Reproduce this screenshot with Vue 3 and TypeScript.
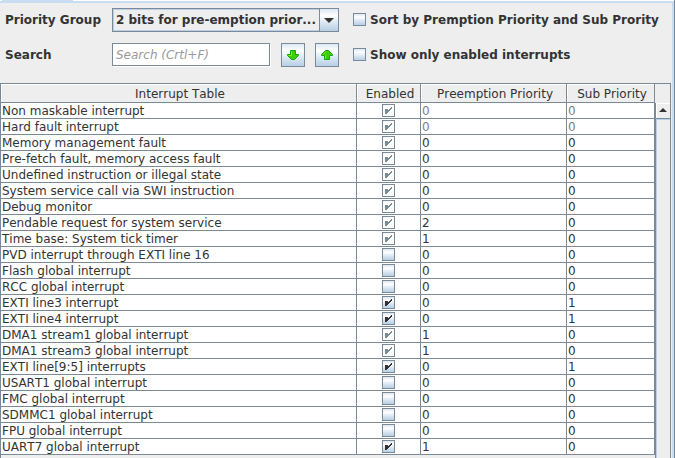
<script setup lang="ts">
import { computed, ref } from 'vue'

interface Interrupt {
  name: string
  enabled: boolean
  locked: boolean
  preemption: number
  sub: number
  fixed?: boolean
}

const make = (
  name: string,
  enabled: boolean,
  locked: boolean,
  preemption = 0,
  sub = 0,
  fixed = false,
): Interrupt => ({ name, enabled, locked, preemption, sub, fixed })

const interrupts = ref<Interrupt[]>([
  make('Non maskable interrupt', true, true, 0, 0, true),
  make('Hard fault interrupt', true, true, 0, 0, true),
  make('Memory management fault', true, true),
  make('Pre-fetch fault, memory access fault', true, true),
  make('Undefined instruction or illegal state', true, true),
  make('System service call via SWI instruction', true, true),
  make('Debug monitor', true, true),
  make('Pendable request for system service', true, true, 2),
  make('Time base: System tick timer', true, true, 1),
  make('PVD interrupt through EXTI line 16', false, false),
  make('Flash global interrupt', false, false),
  make('RCC global interrupt', false, false),
  make('EXTI line3 interrupt', true, false, 0, 1),
  make('EXTI line4 interrupt', true, false, 0, 1),
  make('DMA1 stream1 global interrupt', true, true, 1),
  make('DMA1 stream3 global interrupt', true, true, 1),
  make('EXTI line[9:5] interrupts', true, false, 0, 1),
  make('USART1 global interrupt', false, false),
  make('FMC global interrupt', false, false),
  make('SDMMC1 global interrupt', false, false),
  make('FPU global interrupt', false, false),
  make('UART7 global interrupt', true, false, 1),
])

const checkPath =
  'M3 5h3v1h1v-1h1v-1h1v-1h1v2h-1v1h-1v1h-1v1h-1v1h-1v1h-2z'

const group = ref('2')
const query = ref('')
const sorted = ref(false)
const onlyEnabled = ref(false)

const rows = computed(() => {
  const list = interrupts.value.filter((i) => !onlyEnabled.value || i.enabled)
  return sorted.value
    ? [...list].sort((a, b) => a.preemption - b.preemption || a.sub - b.sub)
    : list
})

const isMatch = (name: string) =>
  query.value !== '' && name.toLowerCase().includes(query.value.toLowerCase())
</script>

<template>
  <main class="panel">
    <div class="tab-edge"><span class="tab-selected"></span></div>

    <form class="controls" @submit.prevent>
      <label for="group">Priority Group</label>
      <div class="combo">
        <select id="group" v-model="group">
          <option value="2">2 bits for pre-emption prior...</option>
        </select>
        <span class="combo-arrow">
          <svg width="10" height="5" viewBox="0 0 10 5"><path d="M0 0H10L5 5Z" /></svg>
        </span>
      </div>
      <label class="option">
        <span class="tick">
          <input v-model="sorted" type="checkbox" />
          <svg width="13" height="13" viewBox="0 0 13 13"><path :d="checkPath" /></svg>
        </span>
        Sort by Premption Priority and Sub Prority
      </label>

      <label for="search">Search</label>
      <div class="search">
        <input id="search" v-model="query" type="text" placeholder="Search (Crtl+F)" />
        <button type="button" aria-label="Next match">
          <svg width="12" height="10" viewBox="0 0 12 10">
            <path class="leaf" d="M3.5 .5h5v4h3v1l-4 4h-3l-4 -4v-1h3z" />
            <path class="shine" d="M4.500 1v4.500h-3" />
          </svg>
        </button>
        <button type="button" aria-label="Previous match">
          <svg width="12" height="10" viewBox="0 0 12 10">
            <path class="leaf" d="M3.5 9.500h5v-4h3v-1l-4 -4h-3l-4 4v1h3z" />
            <path class="shine" d="M2 4.500L5.500 1.500M4.500 5v4" />
          </svg>
        </button>
      </div>
      <label class="option">
        <span class="tick">
          <input v-model="onlyEnabled" type="checkbox" />
          <svg width="13" height="13" viewBox="0 0 13 13"><path :d="checkPath" /></svg>
        </span>
        Show only enabled interrupts
      </label>
    </form>

    <section class="grid-area">
      <table>
        <colgroup>
          <col />
          <col class="col-enabled" />
          <col class="col-preemption" />
          <col class="col-sub" />
        </colgroup>
        <thead>
          <tr>
            <th>Interrupt Table</th>
            <th>Enabled</th>
            <th>Preemption Priority</th>
            <th>Sub Priority</th>
          </tr>
        </thead>
        <tbody>
          <tr v-for="row in rows" :key="row.name" :class="{ match: isMatch(row.name) }">
            <td>{{ row.name }}</td>
            <td class="state">
              <span class="tick">
                <input
                  v-model="row.enabled"
                  type="checkbox"
                  :disabled="row.locked"
                  :aria-label="row.name"
                />
                <svg width="13" height="13" viewBox="0 0 13 13"><path :d="checkPath" /></svg>
              </span>
            </td>
            <td :class="{ fixed: row.fixed }">{{ row.preemption }}</td>
            <td :class="{ fixed: row.fixed }">{{ row.sub }}</td>
          </tr>
        </tbody>
      </table>
      <div class="scrollbar">
        <div class="corner"></div>
        <button type="button" class="scroll-up" aria-label="Scroll up">
          <svg width="8" height="4" viewBox="0 0 8 4"><path d="M0 4H8L4 0Z" /></svg>
        </button>
        <div class="thumb"></div>
      </div>
    </section>
  </main>
</template>

<style>
body {
  margin: 0;
  background: #eeeeee;
}
</style>

<style scoped>
.panel {
  --line: #7a8a99;
  --ocean: linear-gradient(#dde8f3, #ffffff 30%, #dde8f3 60%, #b8cfe5);
  display: flex;
  flex-direction: column;
  box-sizing: border-box;
  min-height: 100vh;
  border-right: 1px solid var(--line);
  box-shadow: inset -2px 0 #c8ddf2;
  padding-right: 3px;
  background: #eeeeee;
  color: #333333;
  font: 12px/14px "DejaVu Sans", sans-serif;
  font-kerning: none;
}

.tab-edge {
  height: 1px;
  margin-right: -3px;
  border-bottom: 2px solid #c8ddf2;
  background: #ffffff;
}

.tab-selected {
  display: block;
  width: 71px;
  height: 1px;
  margin-left: 2px;
  background: #c8ddf2;
}

.controls {
  display: grid;
  grid-template-columns: 107px 227px 1fr;
  row-gap: 11px;
  align-items: center;
  padding: 5px 0 16px 5px;
  font-weight: bold;
  white-space: nowrap;
}

.combo {
  display: grid;
  grid-template-columns: 1fr 20px;
  height: 24px;
}

.combo select {
  grid-area: 1 / 1 / 2 / 3;
  appearance: none;
  box-sizing: border-box;
  width: 100%;
  margin: 0;
  padding: 0 20px 0 3px;
  border: 1px solid var(--line);
  border-radius: 0;
  outline: none;
  background: #eeeeee;
  box-shadow: inset 0 0 0 1px #b8cfe5;
  color: inherit;
  font: inherit;
  font-kerning: none;
}

.combo-arrow {
  grid-area: 1 / 2;
  display: flex;
  align-items: center;
  justify-content: center;
  padding-top: 1px;
  border: 1px solid var(--line);
  background: var(--ocean);
  pointer-events: none;
  z-index: 1;
}

.combo-arrow path,
.scroll-up path {
  fill: #333333;
}

.search {
  display: flex;
  align-items: center;
  gap: 10px;
}

.search input {
  flex: 1;
  box-sizing: border-box;
  min-width: 0;
  height: 23px;
  margin: 0 1px 1px 0;
  padding: 1px 3px 0;
  border: 1px solid var(--line);
  border-radius: 0;
  outline: none;
  background: #ffffff;
  box-shadow: 1px 1px #ffffff;
  color: #333333;
  font: 12px/14px "DejaVu Sans", sans-serif;
  font-kerning: none;
}

.search input::placeholder {
  color: #999999;
  font-style: italic;
  opacity: 1;
}

.search button {
  display: flex;
  align-items: center;
  justify-content: center;
  box-sizing: border-box;
  width: 24px;
  height: 24px;
  padding: 0;
  border: 1px solid var(--line);
  background: var(--ocean);
}

.leaf {
  fill: #3fcf00;
  stroke: #16a016;
}

.shine {
  fill: none;
  stroke: #8be800;
}

.option {
  display: flex;
  align-items: flex-start;
  gap: 4px;
  padding-left: 14px;
}

.tick {
  display: grid;
  width: 13px;
  height: 13px;
}

.tick input {
  grid-area: 1 / 1;
  appearance: none;
  box-sizing: border-box;
  width: 13px;
  height: 13px;
  margin: 0;
  border: 1px solid var(--line);
  background: var(--ocean);
}

.tick input:disabled {
  background: #ffffff;
}

.tick svg {
  grid-area: 1 / 1;
  visibility: hidden;
  fill: #333333;
  pointer-events: none;
  shape-rendering: crispEdges;
  z-index: 1;
}

.tick input:checked + svg {
  visibility: visible;
}

.tick input:disabled + svg {
  fill: #7a8a99;
}

.grid-area {
  display: flex;
  flex: 1;
  align-items: stretch;
  border: 1px solid var(--line);
  border-bottom: 0;
}

table {
  flex: 1;
  align-self: flex-start;
  table-layout: fixed;
  width: 0;
  border-collapse: separate;
  border-spacing: 0;
}

.col-enabled {
  width: 64px;
}

.col-preemption {
  width: 146px;
}

.col-sub {
  width: 88px;
}

th,
td {
  box-sizing: border-box;
  padding: 0;
  border-right: 1px solid var(--line);
  border-bottom: 1px solid var(--line);
  white-space: nowrap;
}

th {
  height: 19px;
  padding: 1px 0 0 3px;
  box-shadow: inset 1px 1px #ffffff;
  font-weight: normal;
  text-align: center;
}

td {
  height: 16px;
  padding: 1px 0 0 1px;
  background: #ffffff;
  line-height: 14px;
}

.state {
  padding: 0;
}

.state .tick {
  margin: 0 auto;
}

.fixed {
  color: #808080;
}

.match td {
  background: #b8cfe5;
}

.scrollbar {
  display: flex;
  flex-direction: column;
  width: 15px;
}

.corner {
  height: 19px;
}

.scroll-up {
  display: flex;
  align-items: center;
  justify-content: center;
  box-sizing: border-box;
  height: 16px;
  padding: 0 0 1px;
  border: 0;
  border-left: 1px solid var(--line);
  border-bottom: 1px solid var(--line);
  background: #eeeeee;
  box-shadow: inset 1px 1px #ffffff;
}

.thumb {
  flex: 1;
  border-left: 1px solid var(--line);
  box-shadow: inset 1px 1px #b8cfe5;
}
</style>
